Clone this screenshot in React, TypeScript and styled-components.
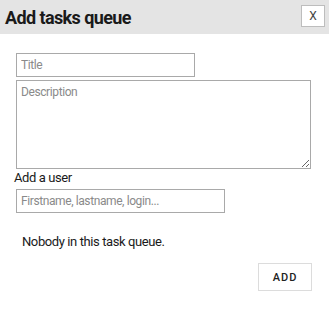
import React, { useState } from "react"
import styled, { createGlobalStyle } from 'styled-components'

const GlobalStyle = createGlobalStyle`
  body {
    margin: 0;
    background: #fff;
    font-family: Roboto, "Liberation Sans", sans-serif;
    color: #222;
  }
`;

const Header = styled.div`
  display: flex;
  align-items: center;
  justify-content: space-between;
  height: 34px;
  padding: 0 4px 0 5px;
  background: #e4e4e4;
`;

const Title = styled.h1`
  margin: 0;
  font-size: 18px;
  font-weight: 700;
  letter-spacing: -0.6px;
  color: #1a1a1a;
`;

const CloseButton = styled.button`
  width: 24px;
  height: 22px;
  margin-top: -2px;
  padding: 0;
  background: #fff;
  border: 1px solid #bdbdbd;
  font-family: inherit;
  font-size: 12px;
  color: #444;
  cursor: pointer;
`;

const Form = styled.form`
  display: flex;
  flex-direction: column;
  padding: 19px 14px 0 14px;
`;

const TextInput = styled.input<{ $width: number }>`
  box-sizing: border-box;
  width: ${p => p.$width}px;
  height: 24px;
  margin-left: 2px;
  padding: 2px 4px;
  border: 1px solid #a9a9a9;
  font-family: inherit;
  font-size: 12px;
  letter-spacing: -0.4px;
  color: #222;

  &::placeholder {
    color: #8a8a8a;
  }
`;

const TextArea = styled.textarea`
  box-sizing: border-box;
  width: 295px;
  height: 89px;
  margin: 3px 0 0 2px;
  padding: 4px 4px;
  border: 1px solid #a9a9a9;
  font-family: inherit;
  font-size: 12px;
  letter-spacing: -0.4px;
  color: #222;

  &::placeholder {
    color: #8a8a8a;
  }
`;

const Label = styled.label`
  display: block;
  margin: 1px 0 4px 0;
  font-size: 13px;
  line-height: 15px;
  letter-spacing: -0.4px;
  color: #1a1a1a;
`;

const Empty = styled.p`
  margin: 21px 0 0 8px;
  font-size: 13px;
  letter-spacing: -0.4px;
  color: #1a1a1a;
`;

const Footer = styled.div`
  display: flex;
  justify-content: flex-end;
  margin-top: 14px;
  padding-right: 3px;
`;

const AddButton = styled.button`
  width: 54px;
  height: 28px;
  background: #fff;
  border: 1px solid #dcdcdc;
  font-family: inherit;
  font-size: 11px;
  font-weight: 500;
  letter-spacing: 1px;
  color: #222;
  cursor: pointer;
`;

const App = () => {
  const [title, setTitle] = useState('')
  const [description, setDescription] = useState('')
  const [user, setUser] = useState('')

  const onSubmit = (e: React.FormEvent) => {
    e.preventDefault()
  }

  return (
    <>
      <GlobalStyle />
      <Header>
        <Title>Add tasks queue</Title>
        <CloseButton type='button'>X</CloseButton>
      </Header>
      <Form onSubmit={onSubmit}>
        <TextInput $width={179} type='text' placeholder='Title'
          value={title} onChange={(e) => setTitle(e.target.value)} />
        <TextArea placeholder='Description'
          value={description} onChange={(e) => setDescription(e.target.value)} />
        <Label>Add a user</Label>
        <TextInput $width={209} type='text' placeholder='Firstname, lastname, login...'
          value={user} onChange={(e) => setUser(e.target.value)} />
        <Empty>Nobody in this task queue.</Empty>
        <Footer>
          <AddButton type='submit'>ADD</AddButton>
        </Footer>
      </Form>
    </>
  )
}

export default App
